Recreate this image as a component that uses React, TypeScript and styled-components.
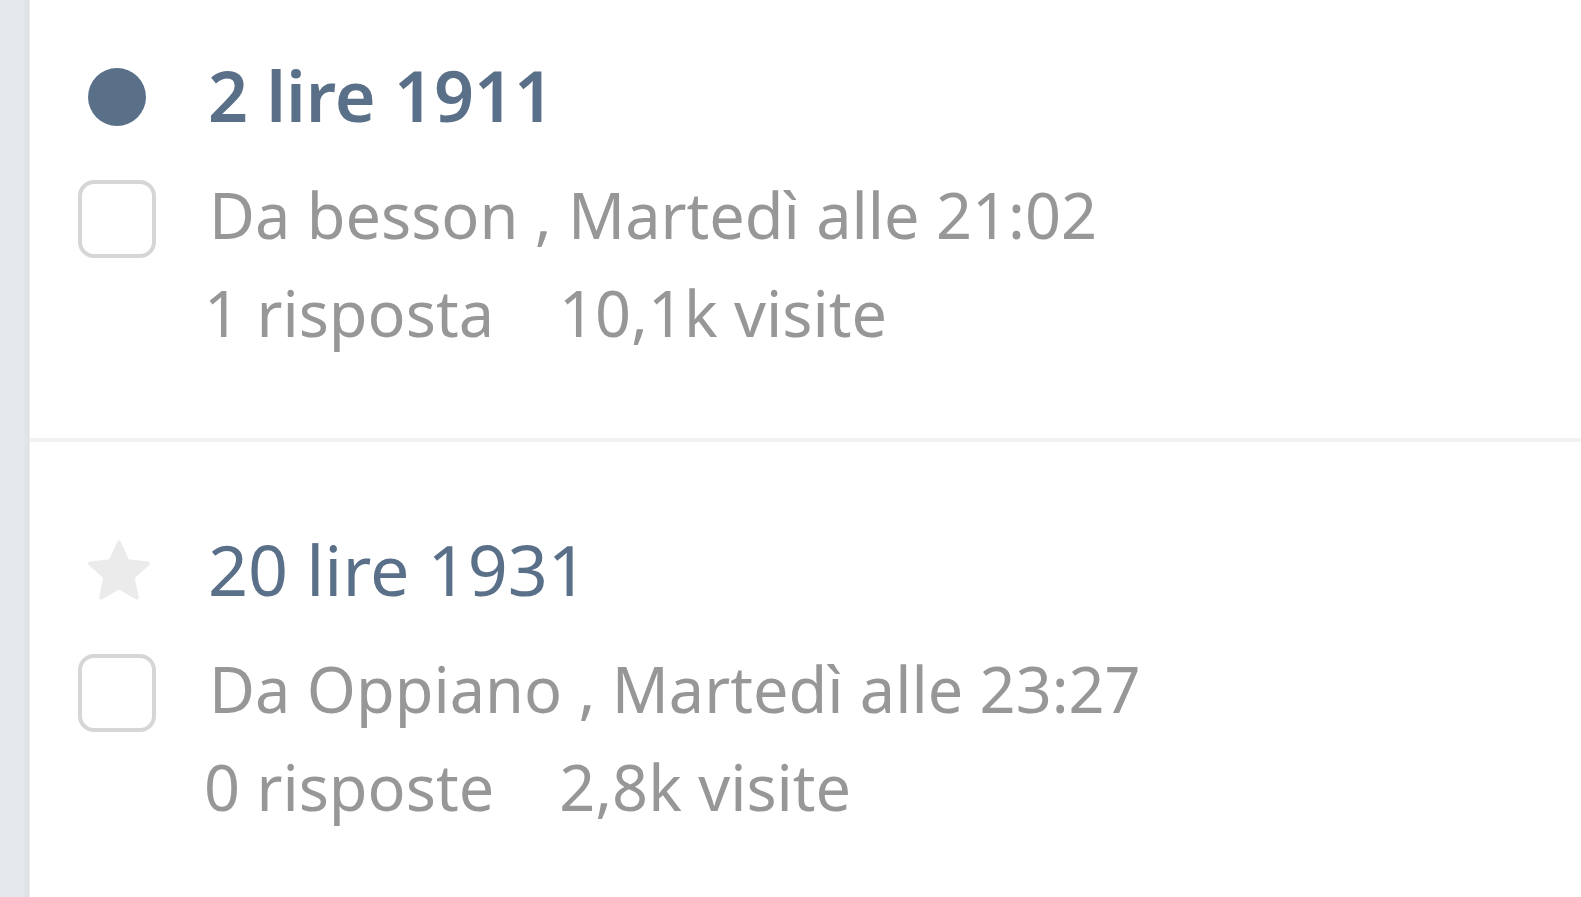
import React from 'react';
import styled, { createGlobalStyle } from 'styled-components';

interface Topic {
  title: string;
  author: string;
  when: string;
  replies: string;
  views: string;
  unread?: boolean;
}

const topics: Topic[] = [
  {
    title: '2 lire 1911',
    author: 'besson',
    when: 'Martedì alle 21:02',
    replies: '1 risposta',
    views: '10,1k visite',
    unread: true,
  },
  {
    title: '20 lire 1931',
    author: 'Oppiano',
    when: 'Martedì alle 23:27',
    replies: '0 risposte',
    views: '2,8k visite',
  },
];

const GlobalStyle = createGlobalStyle`
  html, body {
    margin: 0;
    padding: 0;
    background: #ffffff;
    font-family: "Noto Sans", "Open Sans", "Liberation Sans", sans-serif;
    overflow: hidden;
  }
`;

const StarIcon = () => (
  <svg width="68" height="64" viewBox="0 0 24 22.5">
    <path
      d="M12 1.2l3 6.6 7.2 0.8-5.4 4.9 1.5 7.1L12 17 5.7 20.6l1.5-7.1-5.4-4.9 7.2-0.8z"
      fill="#ebebeb"
      stroke="#ebebeb"
      strokeWidth="1.4"
      strokeLinejoin="round"
    />
  </svg>
);

const TopicRow = ({ topic }: { topic: Topic }) => (
  <Item>
    <IconCell>{topic.unread ? <UnreadDot /> : <StarIcon />}</IconCell>
    <Title unread={topic.unread}>{topic.title}</Title>
    <IconCell>
      <Checkbox />
    </IconCell>
    <Meta>{`Da ${topic.author} , ${topic.when}`}</Meta>
    <span />
    <Stats>
      <span>{topic.replies}</span>
      <span>{topic.views}</span>
    </Stats>
  </Item>
);

export default function App() {
  return (
    <>
      <GlobalStyle />
      <Page>
        <SideBar />
        <List>
          {topics.map(t => (
            <TopicRow key={t.title} topic={t} />
          ))}
        </List>
      </Page>
    </>
  );
}

const Page = styled.div`
  display: flex;
  width: 100vw;
  height: 100vh;
  overflow: hidden;
`;

const SideBar = styled.div`
  flex: 0 0 29px;
  background: linear-gradient(to right, #e4e8eb 0%, #e4e8eb 80%, #dde1e5 100%);
  border-right: 1px solid #eceef0;
`;

const List = styled.div`
  flex: 1;
  display: flex;
  flex-direction: column;
`;

const Item = styled.div`
  display: grid;
  grid-template-columns: 174px 1fr;
  grid-template-rows: 96px 120px 96px;
  padding: 79px 0 79px;
  border-bottom: 4px solid #f1f1f1;

  &:first-child {
    padding-top: 47px;
  }

  & > *:nth-child(3),
  & > *:nth-child(4) {
    align-self: end;
    height: 96px;
  }
`;

const IconCell = styled.div`
  display: flex;
  align-items: center;
  justify-content: center;

  & > svg {
    margin: 4px 0 0 4px;
  }
`;

const UnreadDot = styled.div`
  width: 58px;
  height: 58px;
  border-radius: 50%;
  background: #5a7089;
  margin-top: 4px;
`;

const Checkbox = styled.div`
  box-sizing: border-box;
  width: 78px;
  height: 78px;
  border: 4px solid #d6d6d6;
  border-radius: 16px;
  margin-top: 8px;
`;

const Title = styled.div<{ unread?: boolean }>`
  padding-left: 4px;
  font-size: 70px;
  line-height: 96px;
  font-weight: ${props => (props.unread ? 600 : 400)};
  color: #5a7089;
  white-space: nowrap;
`;

const Meta = styled.div`
  padding-left: 5px;
  font-size: 63px;
  line-height: 96px;
  color: #979797;
  white-space: nowrap;
`;

const Stats = styled(Meta)`
  display: flex;
  gap: 65px;
  padding-left: 0;
  margin-top: 2px;
`;
